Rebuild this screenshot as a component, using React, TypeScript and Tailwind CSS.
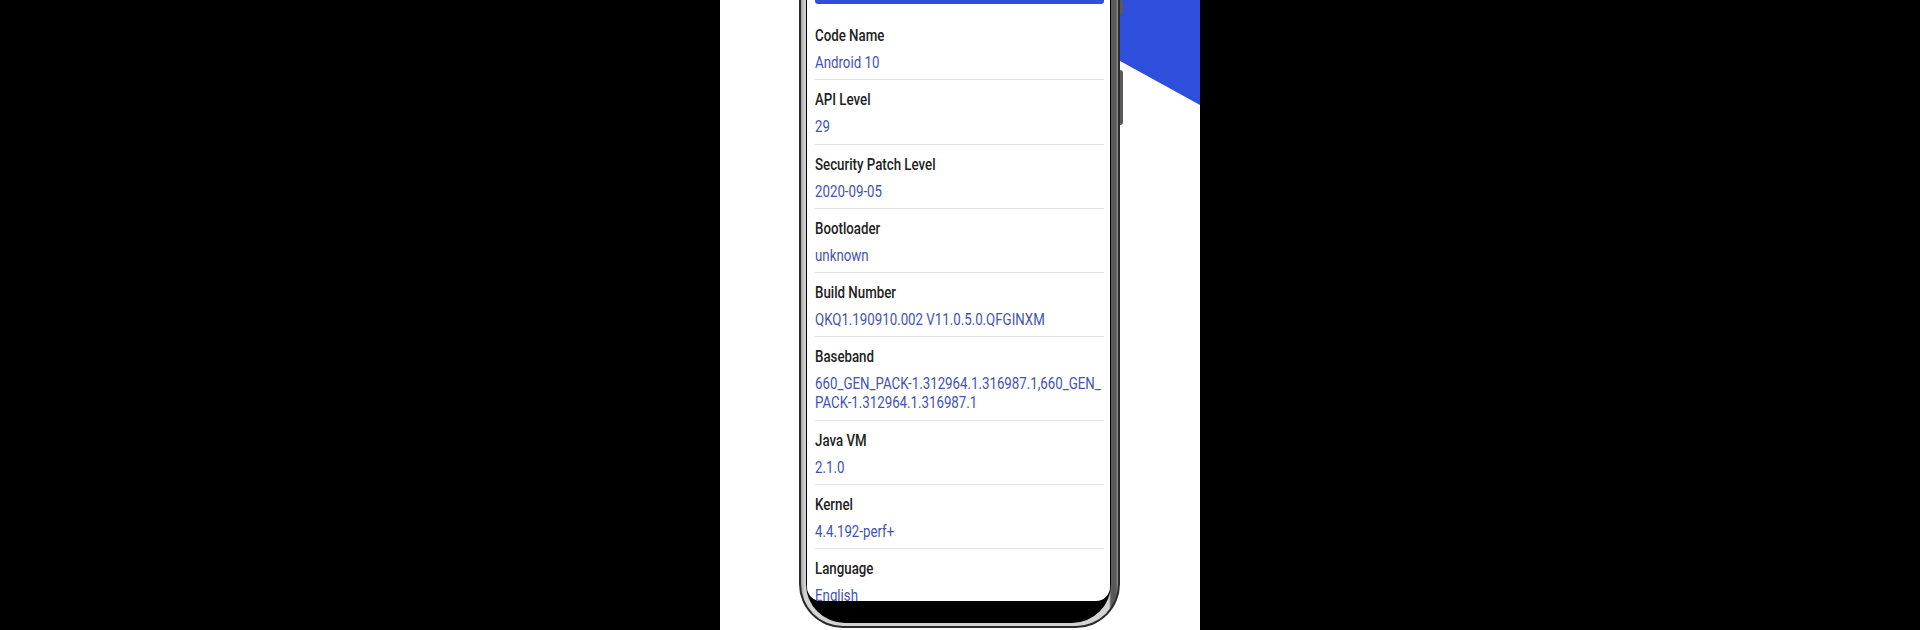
const ROWS: { label: string; value: string[] }[] = [
  { label: "Code Name", value: ["Android 10"] },
  { label: "API Level", value: ["29"] },
  { label: "Security Patch Level", value: ["2020-09-05"] },
  { label: "Bootloader", value: ["unknown"] },
  { label: "Build Number", value: ["QKQ1.190910.002 V11.0.5.0.QFGINXM"] },
  {
    label: "Baseband",
    value: ["660_GEN_PACK-1.312964.1.316987.1,660_GEN_", "PACK-1.312964.1.316987.1"],
  },
  { label: "Java VM", value: ["2.1.0"] },
  { label: "Kernel", value: ["4.4.192-perf+"] },
  { label: "Language", value: ["English"] },
];

function InfoRow({ label, value }: { label: string; value: string[] }) {
  return (
    <div className="pt-[10px] pb-[7.3px] border-b border-[#e2e2e2]">
      <div className="origin-left scale-x-[0.83] whitespace-nowrap text-[16px] leading-[20px] font-medium text-[#222222]">
        {label}
      </div>
      <div className="mt-[7px]">
        {value.map((line) => (
          <div
            key={line}
            className="origin-left scale-x-[0.83] whitespace-nowrap text-[16px] leading-[19px] text-[#4153b3]"
          >
            {line}
          </div>
        ))}
      </div>
    </div>
  );
}

function Phone() {
  return (
    <div className="relative z-10 ml-[79px] w-[321px] h-[628px] rounded-b-[44px] bg-[#2b2b2b] px-[2px] pb-[2px]">
      <div className="h-full rounded-b-[42px] bg-[linear-gradient(to_right,#a4a4a4_0px,#d4d4d4_4px,#d4d4d4_calc(100%_-_9px),#595959_calc(100%_-_7px),#595959_calc(100%_-_2px),#9a9a9a_100%)] pl-[5px] pr-[7px] pb-[3px]">
        <div className="h-full flex flex-col rounded-b-[39px] bg-black px-[1px] pb-[22px]">
          <div className="flex-1 overflow-hidden rounded-bl-[14px] rounded-br-[14px] bg-white pl-[8px] pr-[6px]">
            <div className="h-[4px] rounded-b-[3px] bg-[#2d4fdc]" />
            <div className="mt-[12px]">
              {ROWS.map((r) => (
                <InfoRow key={r.label} label={r.label} value={r.value} />
              ))}
            </div>
          </div>
        </div>
      </div>
      {/* side buttons */}
      <div className="absolute right-[-3px] top-0 w-[3px] h-[15px] rounded-r-sm bg-[#5a5a5a]" />
      <div className="absolute right-[-3px] top-[70px] w-[3px] h-[55px] rounded-r-sm bg-[#5a5a5a]" />
    </div>
  );
}

export default function App() {
  return (
    <div
      className="w-[1920px] h-[630px] bg-black flex justify-center overflow-hidden"
      style={{ fontFamily: "Roboto, 'Noto Sans', sans-serif" }}
    >
      <div className="relative w-[480px] h-full bg-white overflow-hidden">
        <svg
          className="absolute inset-0"
          width="480"
          height="630"
          viewBox="0 0 480 630"
        >
          <polygon points="289,0 480,0 480,105" fill="#2d4fdc" />
        </svg>
        <Phone />
      </div>
    </div>
  );
}
